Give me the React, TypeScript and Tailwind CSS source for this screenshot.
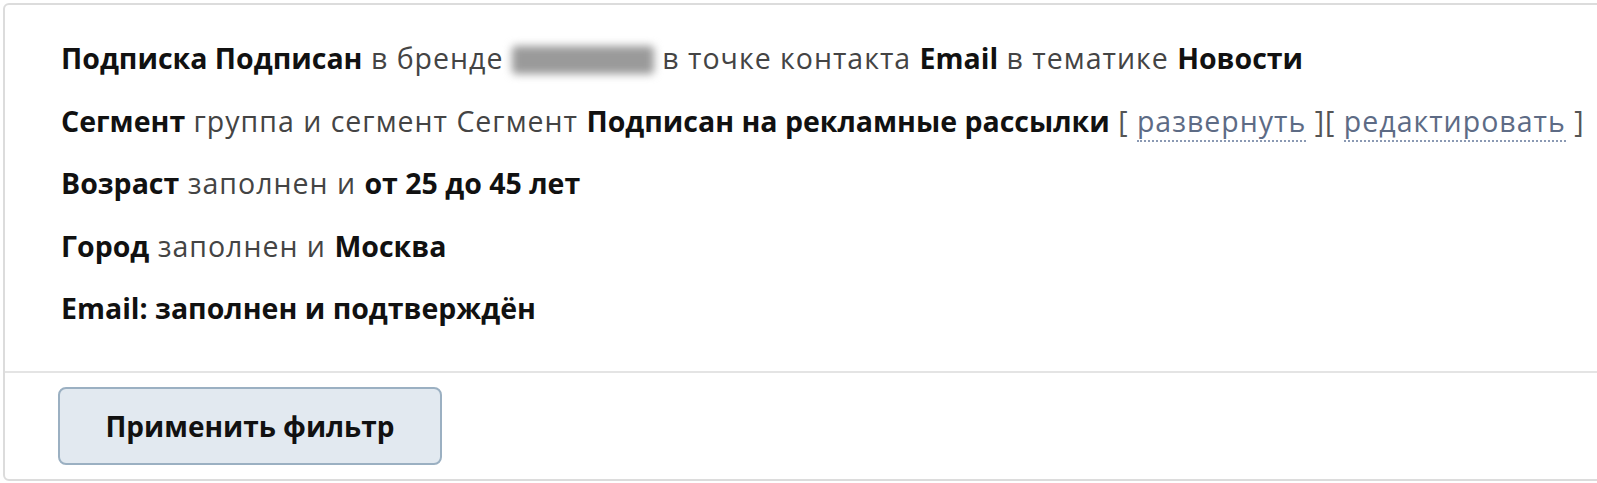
const B = ({ children }: { children: React.ReactNode }) => (
  <b className="font-bold text-[#111] tracking-normal">{children}</b>
);

function Link({ children }: { children: React.ReactNode }) {
  return (
    <span className="text-[#5d6b85] border-b-2 border-dotted border-[#8a99b3]">
      {children}
    </span>
  );
}

export default function App() {
  return (
    <div className="w-[1597px] h-[483px] bg-white pt-[3px] pl-[3px] font-['Open_Sans',sans-serif]">
      <div className="w-[1620px] h-[478px] border-2 border-[#dcdcdc] rounded-[6px] flex flex-col">
        <div className="flex flex-col gap-[26.5px] pl-[56px] pt-[35px] pb-[45px] text-[28.5px] leading-[36px] tracking-[1px] text-[#444] border-b-2 border-[#e4e4e4] whitespace-nowrap">
          <div>
            <B>Подписка Подписан</B> в бренде{' '}
            <span className="inline-block w-[142px] h-[28px] align-[-5px] bg-[#9a9a9a] rounded-[4px] blur-[4px]" />{' '}
            в точке контакта <B>Email</B> в тематике <B>Новости</B>
          </div>
          <div>
            <B>Сегмент</B> группа и сегмент Сегмент <B>Подписан на рекламные рассылки</B>{' '}
            <span className="text-[#555]">[</span> <Link>развернуть</Link>{' '}
            <span className="text-[#555]">][</span> <Link>редактировать</Link>{' '}
            <span className="text-[#555]">]</span>
          </div>
          <div>
            <B>Возраст</B> заполнен и <B>от 25 до 45 лет</B>
          </div>
          <div>
            <B>Город</B> заполнен и <B>Москва</B>
          </div>
          <div>
            <B>Email: заполнен и подтверждён</B>
          </div>
        </div>
        <div className="pl-[53px] pt-[14px]">
          <button className="w-[384px] h-[78px] rounded-[8px] border-2 border-[#9bb0c2] bg-[#e2e9f0] text-[28px] font-bold text-[#111]">
            Применить фильтр
          </button>
        </div>
      </div>
    </div>
  );
}
